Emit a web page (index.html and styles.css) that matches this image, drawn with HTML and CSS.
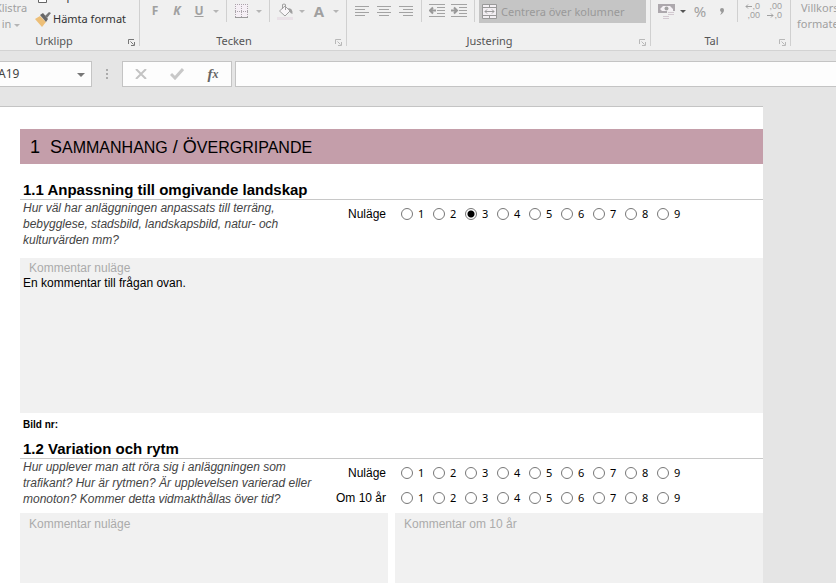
FILE: index.html
```html
<!DOCTYPE html>
<html lang="sv">
<head>
<meta charset="utf-8">
<title>Sammanhang / Övergripande</title>
<link rel="stylesheet" href="styles.css">
</head>
<body>
<header class="ribbon">
  <section class="group group-clipboard">
    <div class="tools">
      <button class="paste" disabled>Klistra<span>in <i class="caret"></i></span></button>
      <div class="stack">
        <button class="line"><svg width="16" height="16" viewBox="0 0 16 16"><path d="M3.500 4.500h8v10h-8z" fill="#fff" stroke="#666"/></svg>Kopiera</button>
        <button class="line"><svg width="16" height="16" viewBox="0 0 16 16"><path d="M0 8l5-3 6 6-4 5z" fill="#edbf78"/><path d="M5 4l3-2 5 6-2 3z" fill="#666"/><path d="M10 5l4-4 2 1-4 5z" fill="#777"/></svg>Hämta format</button>
      </div>
    </div>
    <footer class="caption"><span>Urklipp</span><button class="launcher active" aria-label="Urklipp, fler val"><svg width="7" height="7" viewBox="0 0 7 7"><path d="M.5 5V.5H6M2.500 2.500l3 3M6.500 3v3.500H3" fill="none" stroke="currentColor"/></svg></button></footer>
  </section>
  <section class="group">
    <div class="tools">
      <button class="tool letter" disabled>F</button>
      <button class="tool letter italic" disabled>K</button>
      <button class="tool letter underline" disabled>U</button>
      <button class="drop" disabled aria-label="Understrykning"><i class="caret"></i></button>
      <i class="sep"></i>
      <button class="tool" disabled aria-label="Kantlinjer"><svg width="14" height="16" viewBox="0 0 14 16"><path d="M0 1h13v13H0z" fill="#f5eff5"/><path d="M0 1.500h13M0 8.500h13M.5 1v13M6.500 1v13M12.500 1v13" stroke="#aaa4aa" stroke-dasharray="1 1"/><path d="M0 14.500h13" stroke="#999"/></svg></button>
      <button class="drop" disabled aria-label="Kantlinjer, val"><i class="caret"></i></button>
      <i class="sep"></i>
      <button class="tool" disabled aria-label="Fyllningsfärg"><svg width="16" height="17" viewBox="0 0 16 17"><path d="M2.500 8L8 3l5 5-5 5z" fill="#f8f5f8" stroke="#a0a0a0"/><path d="M5.500 6V1.500q1.500-1 3 0V7" fill="none" stroke="#a0a0a0"/><path d="M11 5q5 0 4.500 6l-2-1z" fill="#a0a0a0"/><path d="M0 14h16v3H0z" fill="#e9e1e7"/></svg></button>
      <button class="drop" disabled aria-label="Fyllningsfärg, val"><i class="caret"></i></button>
      <button class="tool letter big" disabled>A</button>
      <button class="drop" disabled aria-label="Teckenfärg"><i class="caret"></i></button>
    </div>
    <footer class="caption"><span>Tecken</span><button class="launcher" aria-label="Tecken, fler val"><svg width="7" height="7" viewBox="0 0 7 7"><path d="M.5 5V.5H6M2.500 2.500l3 3M6.500 3v3.500H3" fill="none" stroke="currentColor"/></svg></button></footer>
  </section>
  <section class="group">
    <div class="tools">
      <button class="tool" disabled aria-label="Vänsterjustera"><svg width="14" height="12" viewBox="0 0 14 12"><path d="M0 1.500h14M0 4.500h10M0 7.500h14M0 10.500h10" stroke="#a3a3a3"/></svg></button>
      <button class="tool" disabled aria-label="Centrera"><svg width="14" height="12" viewBox="0 0 14 12"><path d="M0 1.500h14M2 4.500h10M0 7.500h14M2 10.500h10" stroke="#a3a3a3"/></svg></button>
      <button class="tool" disabled aria-label="Högerjustera"><svg width="14" height="12" viewBox="0 0 14 12"><path d="M0 1.500h14M4 4.500h10M0 7.500h14M4 10.500h10" stroke="#a3a3a3"/></svg></button>
      <i class="sep"></i>
      <button class="tool" disabled aria-label="Minska indrag"><svg width="16" height="14" viewBox="0 0 16 14"><path d="M0 .5h16M8 3.500h8M8 6.500h8M8 9.500h8M0 12.500h16" stroke="#a3a3a3"/><path d="M7 6.500H1M4 3.500l-3 3 3 3" fill="none" stroke="#999" stroke-width="2"/></svg></button>
      <button class="tool" disabled aria-label="Öka indrag"><svg width="16" height="14" viewBox="0 0 16 14"><path d="M0 .5h16M8 3.500h8M8 6.500h8M8 9.500h8M0 12.500h16" stroke="#a3a3a3"/><path d="M0 6.500h6M3 3.500l3 3-3 3" fill="none" stroke="#999" stroke-width="2"/></svg></button>
      <i class="sep"></i>
      <button class="merge" disabled><svg width="15" height="15" viewBox="0 0 15 15"><path d="M.5.5h14v14H.5z" fill="#f3eff3" stroke="#999"/><path d="M0 3.500h15M0 11.500h15M7.500 0v3.500M7.500 11.500V15M3 7.500h9M5 5.500l-2 2 2 2M10 5.500l2 2-2 2" fill="none" stroke="#999"/></svg>Centrera över kolumner</button>
    </div>
    <footer class="caption"><span>Justering</span><button class="launcher" aria-label="Justering, fler val"><svg width="7" height="7" viewBox="0 0 7 7"><path d="M.5 5V.5H6M2.500 2.500l3 3M6.500 3v3.500H3" fill="none" stroke="currentColor"/></svg></button></footer>
  </section>
  <section class="group">
    <div class="tools">
      <button class="tool" disabled aria-label="Redovisningsformat"><svg width="17" height="17" viewBox="0 0 17 17"><path d="M1 2h15v7H1z" fill="#f5f1f5" stroke="#ada8ad" stroke-width="2"/><path d="M2 3h3L2 6zM15 3h-3l3 3zM2 8V6l2 2z" fill="#ada8ad"/><circle cx="8.500" cy="5.500" r="2" fill="#a3a3a3"/><path d="M9 8h8v5h-4v4H4v-5h5z" fill="#f0f0f0"/><path d="M10 9.500h6M10 11.500h6M5 13.500h6M5 15.500h6" stroke="#d3c9d1"/></svg></button>
      <button class="drop dark" aria-label="Redovisningsformat, val"><i class="caret"></i></button>
      <button class="tool percent" disabled>%</button>
      <button class="tool" disabled aria-label="Tusentalsavgränsare"><svg width="6" height="8" viewBox="0 0 6 8"><path d="M1 3a2 2 0 1 1 4 0q0 3-4 5 1.500-2 1.500-3Q1 4.500 1 3" fill="#999"/></svg></button>
      <i class="sep"></i>
      <button class="tool decimals" disabled aria-label="Öka decimal"><span><svg width="7" height="5" viewBox="0 0 7 5"><path d="M7 2.500H1M3 .5l-2 2 2 2" fill="none" stroke="currentColor"/></svg>,0</span><span>,00</span></button>
      <button class="tool decimals" disabled aria-label="Minska decimal"><span>,00</span><span><svg width="7" height="5" viewBox="0 0 7 5"><path d="M0 2.500h6M4 .5l2 2-2 2" fill="none" stroke="currentColor"/></svg>,0</span></button>
    </div>
    <footer class="caption"><span>Tal</span><button class="launcher" aria-label="Tal, fler val"><svg width="7" height="7" viewBox="0 0 7 7"><path d="M.5 5V.5H6M2.500 2.500l3 3M6.500 3v3.500H3" fill="none" stroke="currentColor"/></svg></button></footer>
  </section>
  <section class="group group-styles">
    <button class="paste" disabled>Villkorsstyrd<span>formatering <i class="caret"></i></span></button>
  </section>
</header>

<div class="formula-row">
  <div class="name-box"><input type="text" value="A19" aria-label="Namnruta"><button aria-label="Visa namn"><i class="caret"></i></button></div>
  <div class="dots"><i></i><i></i><i></i></div>
  <div class="fx-box">
    <button disabled aria-label="Avbryt"><svg width="12" height="10" viewBox="0 0 12 10"><path d="M1 0l10 10M11 0L1 10" stroke="#c3c3c3" stroke-width="2"/></svg></button>
    <button disabled aria-label="Ange"><svg width="14" height="12" viewBox="0 0 14 12"><path d="M1 6l4 4 8-9" fill="none" stroke="#c8c8c8" stroke-width="3"/></svg></button>
    <button class="fx" aria-label="Infoga funktion">f<sub>x</sub></button>
  </div>
  <input class="formula" type="text" aria-label="Formelfält">
</div>

<main class="sheet">
  <h1><span>1</span><span>S<small>AMMANHANG</small> / Ö<small>VERGRIPANDE</small></span></h1>

  <section class="topic">
    <h2>1.1 Anpassning till omgivande landskap</h2>
    <div class="question">
      <p>Hur väl har anläggningen anpassats till terräng, bebygglese, stadsbild, landskapsbild, natur- och kulturvärden mm?</p>
      <div class="ratings">
        <div class="rating" role="radiogroup" aria-labelledby="r1"><span id="r1">Nuläge</span>
          <label><input type="radio" name="a">1</label><label><input type="radio" name="a">2</label><label><input type="radio" name="a" checked>3</label><label><input type="radio" name="a">4</label><label><input type="radio" name="a">5</label><label><input type="radio" name="a">6</label><label><input type="radio" name="a">7</label><label><input type="radio" name="a">8</label><label><input type="radio" name="a">9</label></div>
      </div>
    </div>
    <div class="comment tall"><label for="c1">Kommentar nuläge</label><textarea id="c1">En kommentar till frågan ovan.</textarea></div>
    <p class="picture-no">Bild nr:</p>
  </section>

  <section class="topic last">
    <h2>1.2 Variation och rytm</h2>
    <div class="question">
      <p>Hur upplever man att röra sig i anläggningen som trafikant? Hur är rytmen? Är upplevelsen varierad eller monoton? Kommer detta vidmakthållas över tid?</p>
      <div class="ratings">
        <div class="rating" role="radiogroup" aria-labelledby="r2"><span id="r2">Nuläge</span>
          <label><input type="radio" name="b">1</label><label><input type="radio" name="b">2</label><label><input type="radio" name="b">3</label><label><input type="radio" name="b">4</label><label><input type="radio" name="b">5</label><label><input type="radio" name="b">6</label><label><input type="radio" name="b">7</label><label><input type="radio" name="b">8</label><label><input type="radio" name="b">9</label></div>
        <div class="rating" role="radiogroup" aria-labelledby="r3"><span id="r3">Om 10 år</span>
          <label><input type="radio" name="c">1</label><label><input type="radio" name="c">2</label><label><input type="radio" name="c">3</label><label><input type="radio" name="c">4</label><label><input type="radio" name="c">5</label><label><input type="radio" name="c">6</label><label><input type="radio" name="c">7</label><label><input type="radio" name="c">8</label><label><input type="radio" name="c">9</label></div>
      </div>
    </div>
    <div class="pair">
      <div class="comment"><label for="c2">Kommentar nuläge</label><textarea id="c2"></textarea></div>
      <div class="comment"><label for="c3">Kommentar om 10 år</label><textarea id="c3"></textarea></div>
    </div>
  </section>
</main>
</body>
</html>
```
FILE: styles.css
```css
* { box-sizing: border-box; margin: 0; padding: 0; }

body {
  min-height: 100vh;
  display: flex;
  flex-direction: column;
  overflow-x: hidden;
  background: #e5e5e5;
  font: 12px/16px "Liberation Sans", Arial, sans-serif;
  color: #000;
}

button, input, textarea { font: inherit; color: inherit; border: 0; background: none; outline: 0; }
svg { display: block; flex: none; }

.ribbon {
  display: flex;
  flex: none;
  height: 51px;
  overflow: hidden;
  background: #f0f0f0;
  border-bottom: 1px solid #d3d3d3;
  font-family: "Noto Sans", "Open Sans", sans-serif;
  font-size: 11px;
  color: #a0a0a0;
}

.group {
  flex: none;
  display: flex;
  flex-direction: column;
  height: 46px;
  border-right: 1px solid #d0d0d0;
}

/* The ribbon is scrolled a little past its first group. */
.group-clipboard { width: 153px; margin-left: -13px; }
.group-styles { border-right: 0; padding-left: 6px; }

.tools { display: flex; height: 34px; padding: 0 4px; }
.tool, .drop { display: flex; align-items: center; justify-content: center; height: 22px; }
.tool { width: 22px; }
.drop { width: 12px; }
.sep { width: 1px; height: 22px; margin: 0 4px; background: #d0d0d0; }

.caret {
  display: inline-block;
  vertical-align: middle;
  border: 3px solid transparent;
  border-top-color: #b5b5b5;
  border-bottom: 0;
}
.dark .caret { border-top-color: #555; }

.letter { font-size: 12px; font-weight: bold; }
.italic { font-style: italic; }
.underline { text-decoration: underline; }
.big { font-size: 15px; }
.percent { font-size: 15px; }
.decimals { flex-direction: column; align-items: flex-end; padding-right: 4px; font: 9px/9px "Liberation Sans", sans-serif; }
.decimals span { display: flex; align-items: center; }

.paste { display: flex; flex-direction: column; align-items: center; height: 32px; white-space: nowrap; }
.group-clipboard .paste { width: 36px; margin-left: 2px; }
.stack { display: flex; flex-direction: column; margin: -16px 0 0 6px; color: #333; }
.line { display: flex; align-items: center; gap: 2px; height: 23px; white-space: nowrap; }

.merge {
  display: flex;
  align-items: center;
  gap: 4px;
  width: 167px;
  height: 23px;
  padding-left: 3px;
  background: #c5c5c5;
  color: #999;
  white-space: nowrap;
}

.caption { display: flex; align-items: flex-end; height: 12px; color: #555; }
.caption span { flex: 1; text-align: center; line-height: 10px; }
.launcher { width: 18px; height: 7px; padding-left: 7px; color: #b8b8b8; }
.launcher.active { color: #777; }

.formula-row { display: flex; flex: none; padding: 10px 0 19px; font-family: "Noto Sans", "Open Sans", sans-serif; }
.name-box, .fx-box, .formula { height: 26px; background: #fdfdfd; border: 1px solid #c4c4c4; }
.name-box { display: flex; width: 102px; margin-left: -10px; padding-left: 7px; color: #444; }
.name-box input { flex: 1; min-width: 0; }
.name-box button { width: 20px; }
.name-box .caret { border-width: 4px 4px 0; border-top-color: #777; }
.dots { display: flex; flex-direction: column; align-items: center; justify-content: center; gap: 2px; width: 30px; }
.dots i { width: 2px; height: 2px; background: #ababab; }
.fx-box { display: flex; width: 110px; }
.fx-box button { display: flex; flex: 1; align-items: center; justify-content: center; }
.fx-box .fx { font: italic bold 15px/20px "Liberation Serif", serif; color: #666; }
.fx sub { font-size: 12px; }
.formula { flex: 1; margin-left: 3px; border-right: 0; padding: 0 6px; }

.sheet {
  flex: 1;
  display: flex;
  flex-direction: column;
  margin-right: 73px;
  padding: 22px 0 0 20px;
  background: #fff;
  border-top: 1px solid #c4c4c4;
}

h1 {
  display: flex;
  gap: 10px;
  padding: 1px 10px 0;
  margin-bottom: 14px;
  background: #c49eaa;
  font-size: 18px;
  line-height: 34px;
  font-weight: normal;
}
h1 small { font-size: 16px; line-height: 16px; }

h2 { padding: 2px 3px 0; border-bottom: 1px solid #c8c8c8; font-size: 15px; line-height: 19px; }

.question { display: flex; padding-left: 3px; min-height: 54px; }
.question p { width: 303px; font-style: italic; color: #444; }
.ratings { padding-top: 1px; }
.rating { display: flex; align-items: center; height: 25px; }
.rating span { width: 60px; margin-right: 15px; text-align: right; }
.rating label { display: flex; align-items: center; gap: 5px; width: 32px; font: 11px/12px "Noto Sans", sans-serif; }

input[type="radio"] {
  appearance: none;
  width: 12px;
  height: 12px;
  border: 1px solid #777;
  border-radius: 50%;
  background: #fff;
}
input[type="radio"]:checked { background: radial-gradient(circle, #000 3px, #fff 4px); }

.comment { display: flex; flex-direction: column; flex: 1; padding: 4px 3px 0; background: #f1f1f1; line-height: 15px; }
.comment label { padding-left: 6px; color: #ababab; }
.comment textarea { flex: 1; width: 100%; min-height: 40px; resize: none; line-height: 15px; }
.tall { height: 155px; flex: none; margin-top: 4px; padding-top: 3px; }
.picture-no { padding-left: 3px; font-size: 10px; font-weight: bold; line-height: 24px; }

.last { flex: 1; display: flex; flex-direction: column; }
.pair { display: flex; flex: 1; gap: 7px; }
```
